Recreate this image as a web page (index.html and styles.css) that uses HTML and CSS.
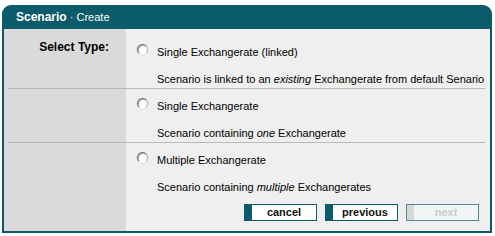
FILE: index.html
```html
<!DOCTYPE html>
<html>
<head>
<meta charset="utf-8">
<link rel="stylesheet" href="styles.css">
</head>
<body>
<div class="panel">
  <div class="header"><span class="title">Scenario</span><span class="sub"> · Create</span></div>
  <div class="body">
    <div class="row sep">
      <div class="label">Select Type:</div>
      <div class="content">
        <div class="opt"><span class="radio"></span><span>Single Exchangerate (linked)</span></div>
        <div class="desc">Scenario is linked to an <i>existing</i> Exchangerate from default Senario</div>
      </div>
    </div>
    <div class="row sep">
      <div class="label"></div>
      <div class="content">
        <div class="opt"><span class="radio"></span><span>Single Exchangerate</span></div>
        <div class="desc">Scenario containing <i>one</i> Exchangerate</div>
      </div>
    </div>
    <div class="row">
      <div class="label"></div>
      <div class="content">
        <div class="opt"><span class="radio"></span><span>Multiple Exchangerate</span></div>
        <div class="desc">Scenario containing <i>multiple</i> Exchangerates</div>
      </div>
    </div>
    <div class="buttons">
      <div class="btn"><span class="bar"></span><span class="btxt">cancel</span></div>
      <div class="btn"><span class="bar"></span><span class="btxt">previous</span></div>
      <div class="btn disabled"><span class="bar"></span><span class="btxt">next</span></div>
    </div>
  </div>
</div>
</body>
</html>
```

FILE: styles.css
```css
html, body {
  margin: 0;
  padding: 0;
  background: #ffffff;
}
body {
  font-family: "Liberation Sans", Arial, sans-serif;
  font-size: 11px;
  color: #000;
}
.panel {
  width: 490px;
  margin: 5px 0 0 2px;
}
.header {
  height: 24px;
  line-height: 24px;
  background: #0b5b6a;
  border-radius: 9px 9px 0 0;
  padding-left: 14px;
  color: #fff;
  white-space: nowrap;
}
.title {
  font-size: 12px;
  font-weight: bold;
}
.sub {
  font-size: 11px;
}
.body {
  border: 2px solid #0b5b6a;
  border-top: 0;
  background: linear-gradient(to right, #dadada 122px, #efefef 122px);
  padding-top: 6px;
  padding-bottom: 10px;
}
.row {
  display: flex;
  margin: 0 5px 0 4px;
  padding-bottom: 1px;
}
.row.sep {
  border-bottom: 1px solid #b9b9b9;
}
.label {
  width: 118px;
  flex: none;
  box-sizing: border-box;
  padding: 2px 17px 0 0;
  text-align: right;
  font-weight: bold;
  font-size: 12px;
  line-height: 20px;
}
.content {
  flex: 1;
  padding-left: 11px;
}
.opt {
  display: flex;
  align-items: flex-start;
  padding-top: 7px;
  height: 20px;
  line-height: 20px;
}
.radio {
  flex: none;
  width: 11px;
  height: 11px;
  margin-top: 2px;
  margin-right: 9px;
  box-sizing: border-box;
  border-radius: 50%;
  border: 1px solid;
  border-color: #6e6e6e #b4b4b4 #f4f4f4 #7a7a7a;
  background: #ffffff;
  box-shadow: inset 1px 1px 0 #a8a8a8, 0 0 0 0.5px #d8d8d8;
}
.desc {
  margin-top: 9px;
  padding-left: 20px;
  line-height: 16px;
  white-space: nowrap;
}
.buttons {
  display: flex;
  justify-content: flex-end;
  gap: 8px;
  margin-top: 8px;
  padding-right: 11px;
}
.btn {
  width: 73px;
  height: 17px;
  box-sizing: border-box;
  border: 1px solid #0b5b6a;
  background: #ffffff;
  display: flex;
}
.bar {
  width: 7px;
  flex: none;
  background: #0b5b6a;
}
.btxt {
  flex: 1;
  text-align: center;
  font-weight: bold;
  font-size: 11px;
  line-height: 15px;
  color: #111;
}
.btn.disabled {
  border-color: #4f8a97;
  background: #f2f5f5;
}
.btn.disabled .bar {
  background: #d6d8d8;
}
.btn.disabled .btxt {
  color: #c9cccc;
}
```
